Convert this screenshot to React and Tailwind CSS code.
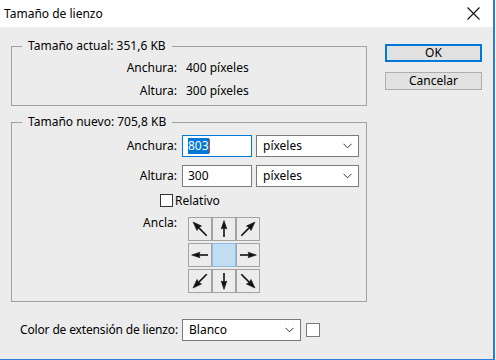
import React from "react";

function Arrow({ deg }) {
  const diag = deg % 90 !== 0;
  return (
    <svg width="22" height="22" viewBox="0 0 22 22">
      <g transform={`rotate(${deg} 11 11)`} fill="#111" stroke="#111">
        {diag ? (
          <>
            <line x1="11" y1="20.5" x2="11" y2="8" strokeWidth="1.6" />
            <polygon points="11,1.2 7.8,10 11,8.8 14.2,10" strokeWidth="0.6" />
          </>
        ) : (
          <>
            <line x1="11" y1="19" x2="11" y2="9" strokeWidth="1.6" />
            <polygon points="11,2.6 8.2,11 11,9.8 13.8,11" strokeWidth="0.6" />
          </>
        )}
      </g>
    </svg>
  );
}

function Chevron() {
  return (
    <svg width="9" height="6" viewBox="0 0 9 6" className="shrink-0">
      <path d="M0.5 0.8 L4.5 4.8 L8.5 0.8" fill="none" stroke="#333" strokeWidth="1" />
    </svg>
  );
}

function Select({ value, className }) {
  return (
    <div
      className={`flex h-[22px] items-center justify-between border border-[#7a7a7a] bg-white pl-[6px] pr-[6px] ${className}`}
    >
      <span>{value}</span>
      <Chevron />
    </div>
  );
}

const anchors = [315, 0, 45, 270, null, 90, 225, 180, 135];

export default function App() {
  return (
    <div className="h-[360px] w-[496px] bg-white font-['Noto_Sans',sans-serif] text-[12px] leading-[16px] text-black">
      <div className="flex h-[360px] w-[495px] flex-col border-b border-r-2 border-[#2a7dd6] bg-[#ececec]">
        {/* title bar */}
        <div className="flex h-[27px] shrink-0 items-center justify-between bg-white pl-[4px] pr-[13px]">
          <span>Tamaño de lienzo</span>
          <svg width="13" height="13" viewBox="0 0 13 13">
            <path d="M0.5 0.5 L12.5 12.5 M12.5 0.5 L0.5 12.5" stroke="#111" strokeWidth="1.1" />
          </svg>
        </div>

        <div className="flex">
          {/* left column */}
          <div className="ml-[11px] mt-[11px] w-[356px]">
            <fieldset className="border border-[#a0a0a0] pb-[3px] pt-[2px]">
              <legend className="ml-[10px] px-[6px] leading-[16px]">Tamaño actual: 351,6 KB</legend>
              <div className="flex h-[23px] items-center">
                <span className="w-[165px] text-right">Anchura:</span>
                <span className="ml-[9px]">400 píxeles</span>
              </div>
              <div className="flex h-[23px] items-center">
                <span className="w-[165px] text-right">Altura:</span>
                <span className="ml-[9px]">300 píxeles</span>
              </div>
            </fieldset>

            <fieldset className="mt-[8px] border border-[#a0a0a0] pb-[8px] pt-[5px]">
              <legend className="ml-[10px] px-[6px] leading-[16px]">Tamaño nuevo: 705,8 KB</legend>
              <div className="flex h-[22px] items-center">
                <span className="w-[165px] text-right">Anchura:</span>
                <div className="ml-[5px] flex h-[22px] w-[70px] items-center border border-[#0078d7] bg-white pl-[5px]">
                  <span className="bg-[#0078d7] text-white">803</span>
                  <span className="h-[14px] w-px bg-[#d24a1e]" />
                </div>
                <Select value="píxeles" className="ml-[4px] w-[103px]" />
              </div>
              <div className="mt-[8px] flex h-[22px] items-center">
                <span className="w-[165px] text-right">Altura:</span>
                <div className="ml-[5px] flex h-[22px] w-[70px] items-center border border-[#7a7a7a] bg-white pl-[5px]">
                  <span>300</span>
                </div>
                <Select value="píxeles" className="ml-[4px] w-[103px]" />
              </div>
              <div className="mt-[7px] flex h-[13px] items-center pl-[148px]">
                <span className="h-[13px] w-[13px] border border-[#333] bg-white" />
                <span className="ml-[2px]">Relativo</span>
              </div>
              <div className="mt-[10px] flex items-start">
                <span className="mt-[-6px] w-[165px] text-right leading-[24px]">Ancla:</span>
                <div className="ml-[11px] grid grid-cols-[24px_24px_24px] gap-y-[2px]">
                  {anchors.map((deg, i) =>
                    deg === null ? (
                      <div key={i} className="h-[24px] w-[24px] border border-[#8ec0ea] bg-[#c2dcf2]" />
                    ) : (
                      <div
                        key={i}
                        className="flex h-[24px] w-[24px] items-center justify-center border border-[#a3a3a3] bg-[#ececec]"
                      >
                        <Arrow deg={deg} />
                      </div>
                    )
                  )}
                </div>
              </div>
            </fieldset>
          </div>

          {/* right column */}
          <div className="ml-[18px] mt-[17px] flex w-[97px] flex-col gap-[10px]">
            <button className="flex h-[18px] items-center justify-center border-2 border-[#0078d7] bg-[#e1e1e1] leading-none">
              OK
            </button>
            <button className="flex h-[18px] items-center justify-center border border-[#adadad] bg-[#e1e1e1] leading-none">
              Cancelar
            </button>
          </div>
        </div>

        {/* bottom row */}
        <div className="ml-[12px] mt-[17px] flex items-center">
          <span className="w-[166px] whitespace-nowrap text-right tracking-[-0.15px]">Color de extensión de lienzo:</span>
          <Select value="Blanco" className="ml-[4px] w-[119px]" />
          <span className="ml-[5px] h-[14px] w-[14px] border border-[#7a7a7a] bg-white" />
        </div>
      </div>
    </div>
  );
}
